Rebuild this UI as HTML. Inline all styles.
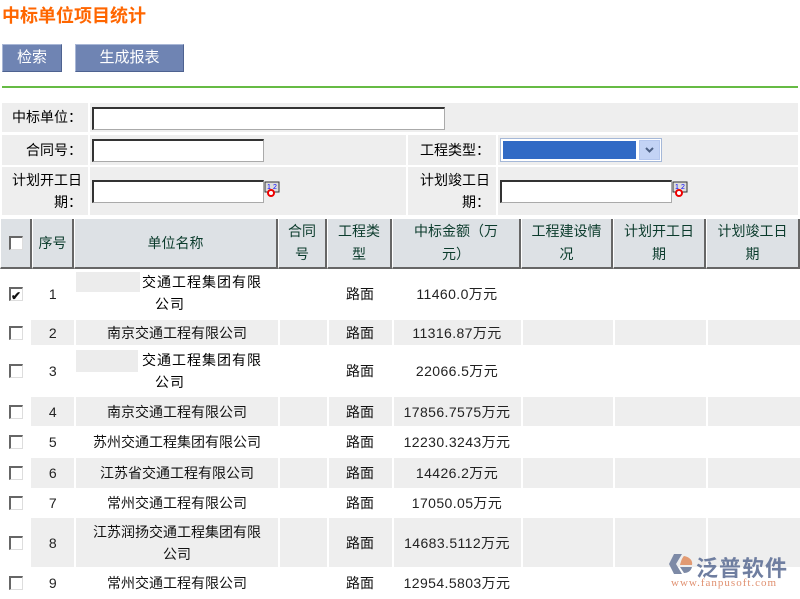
<!DOCTYPE html>
<html><head><meta charset="utf-8"><style>
*{margin:0;padding:0;box-sizing:border-box}
body{width:800px;height:599px;background:#fff;position:relative;overflow:hidden;font-family:"Liberation Sans","Noto Sans CJK SC",sans-serif;font-size:14px;color:#000}
.a{position:absolute}
.t{position:absolute;left:2px;top:2px;font-size:18px;font-weight:bold;color:#ff6600}
.btn{position:absolute;background:#6f84b3;border:1px solid #4e6290;border-left-color:#a9b7d6;border-top-color:#a9b7d6;color:#fff;font-size:15px;text-align:center;line-height:25px}
.lab{position:absolute;background:#eeeeee;text-align:right;padding-right:6px;font-size:14px}
.val{position:absolute;background:#eeeeee}
.inp{position:absolute;background:#fff;border:1px solid #333;border-right-color:#aaa;border-bottom-color:#aaa;border-top:2px solid #333;border-left:2px solid #333}
.h{position:absolute;background:#dde1e5;border-right:2px solid #666;border-bottom:2px solid #666;border-left:1px solid #fff;color:#0b3b2c;text-align:center;font-size:14px;line-height:23px;display:flex;align-items:center;justify-content:center}
.c{position:absolute;display:flex;align-items:center;justify-content:center;text-align:center;font-size:14px;line-height:22px;color:#111}
.g{background:#eeeeee}
.cb{width:14px;height:14px;border:1px solid #777;border-right-color:#ddd;border-bottom-color:#ddd;background:#fff;border-top:2px solid #666;border-left:2px solid #666;position:relative}
.n{font-size:14px;color:#222;letter-spacing:0.4px}
.cal{position:absolute;width:16px;height:16px}
</style></head><body>
<div class="t">中标单位项目统计</div>
<div class="btn" style="left:2px;top:44px;width:60px;height:28px">检索</div>
<div class="btn" style="left:75px;top:44px;width:109px;height:28px">生成报表</div>
<div class="a" style="left:2px;top:86px;width:796px;height:2px;background:#66bb44"></div>

<div class="lab" style="left:2px;top:103px;width:86px;height:29px;line-height:29px">中标单位：</div>
<div class="val" style="left:90px;top:103px;width:708px;height:29px"></div>
<div class="inp" style="left:92px;top:107px;width:353px;height:23px"></div>

<div class="lab" style="left:2px;top:135px;width:86px;height:30px;line-height:30px">合同号：</div>
<div class="val" style="left:90px;top:135px;width:316px;height:30px"></div>
<div class="inp" style="left:92px;top:139px;width:172px;height:23px"></div>
<div class="lab" style="left:408px;top:135px;width:88px;height:30px;line-height:30px">工程类型：</div>
<div class="val" style="left:498px;top:135px;width:300px;height:30px"></div>
<div class="a" style="left:500px;top:138px;width:162px;height:24px;border:1px solid #a5b8d8;background:#fff"></div>
<div class="a" style="left:503px;top:141px;width:133px;height:18px;background:#316ac5"></div>
<div class="a" style="left:639px;top:140px;width:21px;height:20px;background:#c3d3f5;border:1px solid #b5c7ee"><svg width="19" height="18" viewBox="0 0 19 18"><path d="M6 7 L9.5 10.5 L13 7" fill="none" stroke="#4d6185" stroke-width="2"/></svg></div>

<div class="lab" style="left:2px;top:167px;width:86px;height:48px;line-height:22px;padding-top:2px">计划开工日<br>期：</div>
<div class="val" style="left:90px;top:167px;width:316px;height:48px"></div>
<div class="inp" style="left:92px;top:180px;width:172px;height:23px"></div>
<svg class="cal" style="left:264px;top:181px" viewBox="0 0 16 16"><rect x="1" y="1" width="14" height="10" fill="#ddd" stroke="#333"/><text x="3" y="8" font-size="7" fill="#00f" font-family="Liberation Sans">1</text><text x="9" y="8" font-size="7" fill="#00f" font-family="Liberation Sans">2</text><circle cx="7" cy="12" r="3" fill="#fff" stroke="#e00" stroke-width="2"/></svg>
<div class="lab" style="left:408px;top:167px;width:88px;height:48px;line-height:22px;padding-top:2px">计划竣工日<br>期：</div>
<div class="val" style="left:498px;top:167px;width:300px;height:48px"></div>
<div class="inp" style="left:500px;top:180px;width:172px;height:23px"></div>
<svg class="cal" style="left:672px;top:181px" viewBox="0 0 16 16"><rect x="1" y="1" width="14" height="10" fill="#ddd" stroke="#333"/><text x="3" y="8" font-size="7" fill="#00f" font-family="Liberation Sans">1</text><text x="9" y="8" font-size="7" fill="#00f" font-family="Liberation Sans">2</text><circle cx="7" cy="12" r="3" fill="#fff" stroke="#e00" stroke-width="2"/></svg>

<div class="h" style="left:0;top:219px;width:32px;height:50px"><div class="cb"></div></div>
<div class="h" style="left:32px;top:219px;width:42px;height:50px">序号</div>
<div class="h" style="left:74px;top:219px;width:204px;height:50px">单位名称</div>
<div class="h" style="left:278px;top:219px;width:49px;height:50px">合同<br>号</div>
<div class="h" style="left:327px;top:219px;width:65px;height:50px">工程类<br>型</div>
<div class="h" style="left:392px;top:219px;width:129px;height:50px">中标金额（万<br>元）</div>
<div class="h" style="left:521px;top:219px;width:92px;height:50px">工程建设情<br>况</div>
<div class="h" style="left:613px;top:219px;width:93px;height:50px">计划开工日<br>期</div>
<div class="h" style="left:706px;top:219px;width:94px;height:50px">计划竣工日<br>期</div>

<div class="a g" style="left:31px;top:320px;width:43px;height:25px"></div><div class="a g" style="left:76px;top:320px;width:202px;height:25px"></div><div class="a g" style="left:280px;top:320px;width:47px;height:25px"></div><div class="a g" style="left:329px;top:320px;width:63px;height:25px"></div><div class="a g" style="left:394px;top:320px;width:127px;height:25px"></div><div class="a g" style="left:523px;top:320px;width:90px;height:25px"></div><div class="a g" style="left:615px;top:320px;width:91px;height:25px"></div><div class="a g" style="left:708px;top:320px;width:92px;height:25px"></div>
<div class="a g" style="left:31px;top:397px;width:43px;height:29px"></div><div class="a g" style="left:76px;top:397px;width:202px;height:29px"></div><div class="a g" style="left:280px;top:397px;width:47px;height:29px"></div><div class="a g" style="left:329px;top:397px;width:63px;height:29px"></div><div class="a g" style="left:394px;top:397px;width:127px;height:29px"></div><div class="a g" style="left:523px;top:397px;width:90px;height:29px"></div><div class="a g" style="left:615px;top:397px;width:91px;height:29px"></div><div class="a g" style="left:708px;top:397px;width:92px;height:29px"></div>
<div class="a g" style="left:31px;top:458px;width:43px;height:30px"></div><div class="a g" style="left:76px;top:458px;width:202px;height:30px"></div><div class="a g" style="left:280px;top:458px;width:47px;height:30px"></div><div class="a g" style="left:329px;top:458px;width:63px;height:30px"></div><div class="a g" style="left:394px;top:458px;width:127px;height:30px"></div><div class="a g" style="left:523px;top:458px;width:90px;height:30px"></div><div class="a g" style="left:615px;top:458px;width:91px;height:30px"></div><div class="a g" style="left:708px;top:458px;width:92px;height:30px"></div>
<div class="a g" style="left:31px;top:518px;width:43px;height:49px"></div><div class="a g" style="left:76px;top:518px;width:202px;height:49px"></div><div class="a g" style="left:280px;top:518px;width:47px;height:49px"></div><div class="a g" style="left:329px;top:518px;width:63px;height:49px"></div><div class="a g" style="left:394px;top:518px;width:127px;height:49px"></div><div class="a g" style="left:523px;top:518px;width:90px;height:49px"></div><div class="a g" style="left:615px;top:518px;width:91px;height:49px"></div><div class="a g" style="left:708px;top:518px;width:92px;height:49px"></div>

<!-- row1 -->
<div class="c" style="left:0;top:270px;width:32px;height:48px"><div class="cb"><span style="position:absolute;left:0;top:-4px;font-size:12px;font-weight:bold">✔</span></div></div>
<div class="c n" style="left:32px;top:270px;width:42px;height:48px">1</div>
<div class="a" style="left:76px;top:272px;width:64px;height:20px;background:#ececec"></div>
<div class="a" style="left:142px;top:271px;font-size:14px;line-height:22px;letter-spacing:1px">交通工程集团有限</div>
<div class="a" style="left:155px;top:293px;font-size:14px;line-height:22px;letter-spacing:1px">公司</div>
<div class="c" style="left:328px;top:270px;width:64px;height:48px">路面</div>
<div class="c n" style="left:393px;top:270px;width:128px;height:48px">11460.0万元</div>
<!-- row2 -->
<div class="c" style="left:0;top:320px;width:32px;height:25px"><div class="cb"></div></div>
<div class="c n" style="left:32px;top:320px;width:42px;height:25px">2</div>
<div class="c" style="left:76px;top:320px;width:202px;height:25px">南京交通工程有限公司</div>
<div class="c" style="left:328px;top:320px;width:64px;height:25px">路面</div>
<div class="c n" style="left:393px;top:320px;width:128px;height:25px">11316.87万元</div>
<!-- row3 -->
<div class="c" style="left:0;top:345px;width:32px;height:52px"><div class="cb"></div></div>
<div class="c n" style="left:32px;top:345px;width:42px;height:52px">3</div>
<div class="a" style="left:76px;top:350px;width:62px;height:22px;background:#ececec"></div>
<div class="a" style="left:142px;top:349px;font-size:14px;line-height:22px;letter-spacing:1px">交通工程集团有限</div>
<div class="a" style="left:155px;top:371px;font-size:14px;line-height:22px;letter-spacing:1px">公司</div>
<div class="c" style="left:328px;top:345px;width:64px;height:52px">路面</div>
<div class="c n" style="left:393px;top:345px;width:128px;height:52px">22066.5万元</div>
<!-- row4 -->
<div class="c" style="left:0;top:397px;width:32px;height:29px"><div class="cb"></div></div>
<div class="c n" style="left:32px;top:397px;width:42px;height:29px">4</div>
<div class="c" style="left:76px;top:397px;width:202px;height:29px">南京交通工程有限公司</div>
<div class="c" style="left:328px;top:397px;width:64px;height:29px">路面</div>
<div class="c n" style="left:393px;top:397px;width:128px;height:29px">17856.7575万元</div>
<!-- row5 -->
<div class="c" style="left:0;top:427px;width:32px;height:30px"><div class="cb"></div></div>
<div class="c n" style="left:32px;top:427px;width:42px;height:30px">5</div>
<div class="c" style="left:76px;top:427px;width:202px;height:30px">苏州交通工程集团有限公司</div>
<div class="c" style="left:328px;top:427px;width:64px;height:30px">路面</div>
<div class="c n" style="left:393px;top:427px;width:128px;height:30px">12230.3243万元</div>
<!-- row6 -->
<div class="c" style="left:0;top:458px;width:32px;height:30px"><div class="cb"></div></div>
<div class="c n" style="left:32px;top:458px;width:42px;height:30px">6</div>
<div class="c" style="left:76px;top:458px;width:202px;height:30px">江苏省交通工程有限公司</div>
<div class="c" style="left:328px;top:458px;width:64px;height:30px">路面</div>
<div class="c n" style="left:393px;top:458px;width:128px;height:30px">14426.2万元</div>
<!-- row7 -->
<div class="c" style="left:0;top:489px;width:32px;height:28px"><div class="cb"></div></div>
<div class="c n" style="left:32px;top:489px;width:42px;height:28px">7</div>
<div class="c" style="left:76px;top:489px;width:202px;height:28px">常州交通工程有限公司</div>
<div class="c" style="left:328px;top:489px;width:64px;height:28px">路面</div>
<div class="c n" style="left:393px;top:489px;width:128px;height:28px">17050.05万元</div>
<!-- row8 -->
<div class="c" style="left:0;top:518px;width:32px;height:49px"><div class="cb"></div></div>
<div class="c n" style="left:32px;top:518px;width:42px;height:49px">8</div>
<div class="c" style="left:76px;top:518px;width:202px;height:49px">江苏润扬交通工程集团有限<br>公司</div>
<div class="c" style="left:328px;top:518px;width:64px;height:49px">路面</div>
<div class="c n" style="left:393px;top:518px;width:128px;height:49px">14683.5112万元</div>
<!-- row9 -->
<div class="c" style="left:0;top:568px;width:32px;height:29px"><div class="cb"></div></div>
<div class="c n" style="left:32px;top:568px;width:42px;height:29px">9</div>
<div class="c" style="left:76px;top:568px;width:202px;height:29px">常州交通工程有限公司</div>
<div class="c" style="left:328px;top:568px;width:64px;height:29px">路面</div>
<div class="c n" style="left:393px;top:568px;width:128px;height:29px">12954.5803万元</div>

<svg class="a" style="left:668px;top:553px" width="26" height="22" viewBox="0 0 26 22"><path d="M6 1 L14 1 L8 11 L14 21 L6 21 L1 11Z" fill="#7d8aa6"/><path d="M16 3 C22 4 25 8 24 12 L12 12 C13 8 14 5 16 3Z" fill="#e29a72"/><path d="M12 14 L24 14 C23 18 20 20 16 20Z" fill="#7d8aa6"/></svg>
<div class="a" style="left:696px;top:551px;font-size:22px;color:#6f7ea0;font-weight:bold;letter-spacing:1px">泛普软件</div>
<div class="a" style="left:671px;top:577px;font-size:11px;color:#e09070;font-family:'Liberation Serif',serif;letter-spacing:1px">www.fanpusoft.com</div>
</body></html>
